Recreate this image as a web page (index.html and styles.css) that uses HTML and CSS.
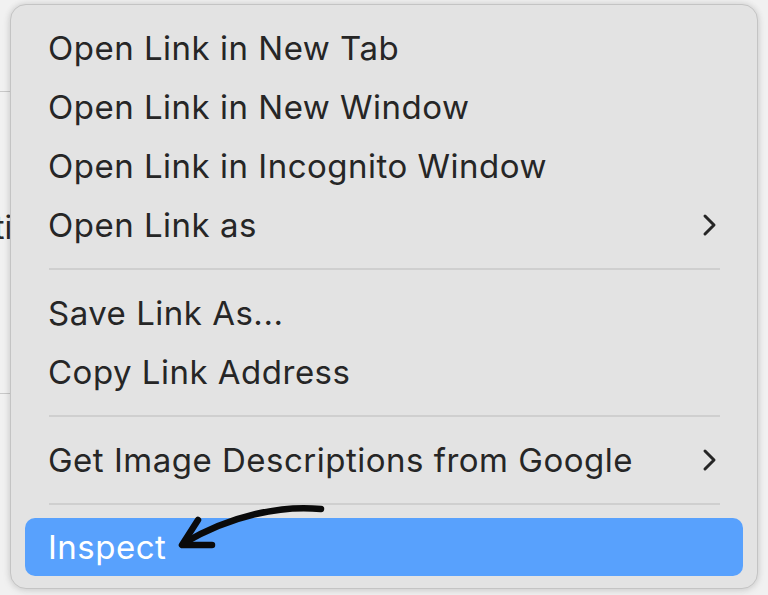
FILE: index.html
```html
<!DOCTYPE html>
<html>
<head>
<meta charset="utf-8">
<link rel="stylesheet" href="styles.css">
</head>
<body>
<div class="backdrop">
  <div class="bd-line bd-line-1"></div>
  <div class="bd-text">ti</div>
  <div class="bd-line bd-line-2"></div>
</div>
<div class="menu">
  <div class="item">Open Link in New Tab</div>
  <div class="item">Open Link in New Window</div>
  <div class="item">Open Link in Incognito Window</div>
  <div class="item">Open Link as
    <svg class="chev" viewBox="0 0 16 24" width="16" height="24"><path d="M4 3 L13 12 L4 21" fill="none" stroke="#262626" stroke-width="3" stroke-linecap="round" stroke-linejoin="round"/></svg>
  </div>
  <div class="sep"></div>
  <div class="item">Save Link As...</div>
  <div class="item">Copy Link Address</div>
  <div class="sep"></div>
  <div class="item">Get Image Descriptions from Google
    <svg class="chev" viewBox="0 0 16 24" width="16" height="24"><path d="M4 3 L13 12 L4 21" fill="none" stroke="#262626" stroke-width="3" stroke-linecap="round" stroke-linejoin="round"/></svg>
  </div>
  <div class="sep"></div>
  <div class="item active">Inspect</div>
  <svg class="arrow" viewBox="0 0 175 60" width="175" height="60">
    <path d="M161 14 C122 10 72 20 24 48" fill="none" stroke="#0a0a0a" stroke-width="6.5" stroke-linecap="round"/>
    <path d="M38 25 L22 50 L52 50" fill="none" stroke="#0a0a0a" stroke-width="6.5" stroke-linecap="round" stroke-linejoin="round"/>
  </svg>
</div>
</body>
</html>
```

FILE: styles.css
```css
html, body {
  margin: 0;
  padding: 0;
}
body {
  width: 768px;
  height: 595px;
  overflow: hidden;
  background: #f1f1f1;
  font-family: Inter, "Noto Sans", sans-serif;
  position: relative;
}
.backdrop {
  padding-top: 91px;
}
.bd-line {
  height: 1px;
  width: 12px;
  background: #c9c9c9;
}
.bd-text {
  margin-top: 118px;
  margin-left: -6px;
  font-size: 32px;
  color: #2a2a2a;
  line-height: 36px;
}
.bd-line-2 {
  margin-top: 147px;
}
.menu {
  position: absolute;
  left: 10px;
  top: 4px;
  width: 718px;
  height: 558px;
  padding: 13px 14px 12px 14px;
  background: #e3e3e3;
  border: 1px solid #c4c4c4;
  border-radius: 16px;
  box-shadow: 0 0 6px rgba(0, 0, 0, 0.12), 0 2px 10px rgba(0, 0, 0, 0.08);
}
.item {
  height: 59px;
  display: flex;
  align-items: center;
  justify-content: space-between;
  padding: 0 26px 0 23px;
  font-size: 33px;
  color: #262626;
  letter-spacing: 0.5px;
  border-radius: 10px;
}
.chev {
  display: block;
}
.sep {
  height: 29px;
  display: flex;
  align-items: center;
  padding: 0 23px 0 24px;
}
.sep::before {
  content: "";
  flex: 1;
  height: 2px;
  background: #cfcfcf;
}
.item.active {
  height: 58px;
  background: #58a1fd;
  color: #ffffff;
}
.arrow {
  position: absolute;
  left: 149px;
  top: 490px;
}
```
